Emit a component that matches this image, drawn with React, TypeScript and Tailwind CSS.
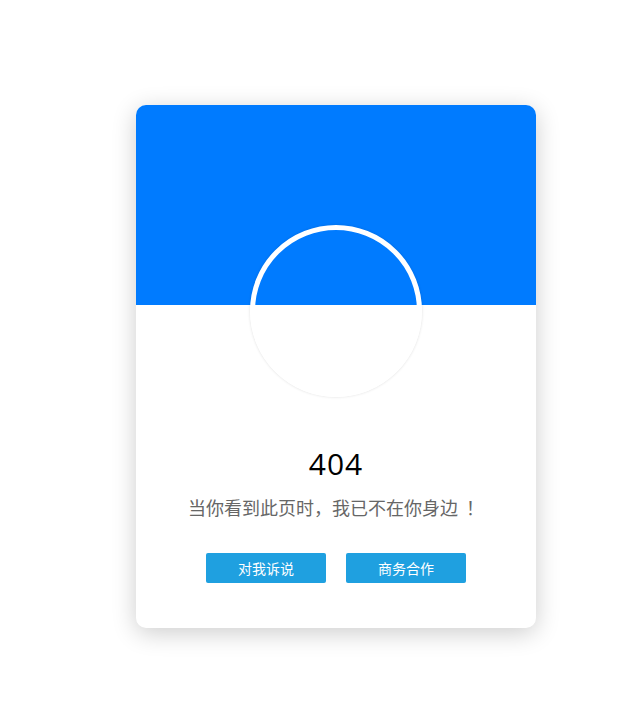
import React from "react";

function App() {
  return (
    <div className="min-h-[723px] w-full bg-white pt-[105px] pl-[136px] font-['Noto_Sans_CJK_SC',sans-serif]">
      <div className="w-[400px] h-[523px] rounded-[10px] bg-white overflow-hidden shadow-[0_5px_25px_rgba(0,0,0,0.2)] flex flex-col items-center">
        <div className="w-full h-[200px] shrink-0 bg-[#007bff]" />
        <div className="-mt-[80px] w-[172px] h-[172px] shrink-0 rounded-full border-[5px] border-white shadow-[0_0_3px_rgba(0,0,0,0.14)]" />
        <h1 className="mt-[49px] text-[30px] leading-[36px] text-black font-normal font-['Open_Sans',sans-serif] tracking-[1px]">
          404
        </h1>
        <p className="mt-[13px] text-[18px] leading-[24px] text-[#666]">
          当你看到此页时，我已不在你身边<span className="pl-[8px]">！</span>
        </p>
        <div className="mt-[34px] flex gap-[20px]">
          <button className="w-[120px] h-[30px] rounded-[2px] bg-[#1fa0e0] text-white text-[14px]">
            对我诉说
          </button>
          <button className="w-[120px] h-[30px] rounded-[2px] bg-[#1fa0e0] text-white text-[14px]">
            商务合作
          </button>
        </div>
      </div>
    </div>
  );
}

export default App;
